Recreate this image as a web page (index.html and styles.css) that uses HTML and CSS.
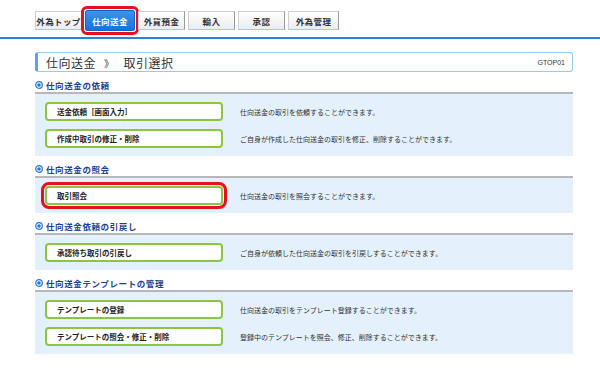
FILE: index.html
```html
<!DOCTYPE html>
<html lang="ja">
  <head>
    <meta charset="UTF-8" />
    <meta name="viewport" content="width=device-width, initial-scale=1.0" />
    <title>仕向送金 取引選択</title>
    <link rel="stylesheet" href="styles.css">
  </head>
  <body>
    <div class="tabs">
      <span class="tab">外為トップ</span>
      <span class="tab activo">仕向送金</span>
      <span class="tab">外貨預金</span>
      <span class="tab">輸入</span>
      <span class="tab">承認</span>
      <span class="tab ancho">外為管理</span>
    </div>
    <div class="linea"></div>

    <div class="contenido">
      <div class="titulo">
        <span>仕向送金<span class="sep">》</span>取引選択</span>
        <span class="codigo">GTOP01</span>
      </div>

      <div class="seccion">
        <h2><svg width="8" height="8" viewBox="0 0 8 8"><circle cx="4" cy="4" r="3.3" fill="#fff" stroke="#2474d6" stroke-width="1.2"/><circle cx="4" cy="4" r="1.8" fill="#2474d6"/></svg>仕向送金の依頼</h2>
        <div class="panel">
          <div class="fila">
            <span class="boton">送金依頼［画面入力］</span>
            <span class="desc">仕向送金の取引を依頼することができます。</span>
          </div>
          <div class="fila">
            <span class="boton">作成中取引の修正・削除</span>
            <span class="desc">ご自身が作成した仕向送金の取引を修正、削除することができます。</span>
          </div>
        </div>
      </div>

      <div class="seccion">
        <h2><svg width="8" height="8" viewBox="0 0 8 8"><circle cx="4" cy="4" r="3.3" fill="#fff" stroke="#2474d6" stroke-width="1.2"/><circle cx="4" cy="4" r="1.8" fill="#2474d6"/></svg>仕向送金の照会</h2>
        <div class="panel">
          <div class="fila">
            <span class="boton marcado">取引照会</span>
            <span class="desc">仕向送金の取引を照会することができます。</span>
          </div>
        </div>
      </div>

      <div class="seccion">
        <h2><svg width="8" height="8" viewBox="0 0 8 8"><circle cx="4" cy="4" r="3.3" fill="#fff" stroke="#2474d6" stroke-width="1.2"/><circle cx="4" cy="4" r="1.8" fill="#2474d6"/></svg>仕向送金依頼の引戻し</h2>
        <div class="panel">
          <div class="fila">
            <span class="boton">承認待ち取引の引戻し</span>
            <span class="desc">ご自身が依頼した仕向送金の取引を引戻しすることができます。</span>
          </div>
        </div>
      </div>

      <div class="seccion">
        <h2><svg width="8" height="8" viewBox="0 0 8 8"><circle cx="4" cy="4" r="3.3" fill="#fff" stroke="#2474d6" stroke-width="1.2"/><circle cx="4" cy="4" r="1.8" fill="#2474d6"/></svg>仕向送金テンプレートの管理</h2>
        <div class="panel">
          <div class="fila">
            <span class="boton">テンプレートの登録</span>
            <span class="desc">仕向送金の取引をテンプレート登録することができます。</span>
          </div>
          <div class="fila">
            <span class="boton">テンプレートの照会・修正・削除</span>
            <span class="desc">登録中のテンプレートを照会、修正、削除することができます。</span>
          </div>
        </div>
      </div>
    </div>
  </body>
</html>
```

FILE: styles.css
```css
body {
  font-family: "Noto Sans CJK JP", "Liberation Sans", sans-serif;
  background: #fff;
  color: #222;
  margin: 0;
}
.tabs {
  display: flex;
  align-items: center;
  gap: 3px;
  height: 21px;
  margin-top: 10px;
  padding-left: 35px;
}
.tab {
  width: 47px;
  height: 19px;
  box-sizing: border-box;
  display: flex;
  align-items: center;
  justify-content: center;
  font-size: 8.5px;
  font-weight: bold;
  letter-spacing: 0.4px;
  color: #333;
  background: linear-gradient(#ffffff, #ececec);
  border: 1px solid #cfcfcf;
  border-right-color: #9a9a9a;
  border-bottom: 1px solid #a9c8ea;
}
.tab.ancho {
  width: 51px;
}
.tab.activo {
  width: 50px;
  height: 21px;
  color: #fff;
  background: linear-gradient(#3b93f0, #1673dc);
  border: 1px solid #1463c4;
  border-radius: 2px;
  outline: 3px solid #e8101e;
  outline-offset: 1px;
}
.linea {
  height: 2px;
  background: #2a7fe3;
  margin-top: 6px;
}
.contenido {
  margin: 13px 27px 0 35px;
}
.titulo {
  height: 20px;
  box-sizing: border-box;
  display: flex;
  align-items: center;
  justify-content: space-between;
  padding: 0 7px 0 8px;
  border: 1px solid #98c8f4;
  border-left: 3px solid #5aa2ea;
  border-radius: 3px;
  font-size: 12px;
  letter-spacing: 0.5px;
  color: #333;
}
.sep {
  margin: 0 9px 0 8px;
  font-size: 10px;
}
.codigo {
  font-family: "Liberation Sans", sans-serif;
  font-size: 7px;
  letter-spacing: 0;
}
.seccion {
  margin-top: 6px;
}
.seccion:first-of-type {
  margin-top: 8px;
}
.seccion h2 {
  display: flex;
  align-items: center;
  gap: 3px;
  height: 14px;
  margin: 0;
  font-size: 8.5px;
  font-weight: bold;
  letter-spacing: 0.6px;
  color: #1d3f91;
  border-bottom: 2px solid #b8b8b8;
}
.panel {
  background: #e4f1fc;
  padding: 8px 10px;
  display: flex;
  flex-direction: column;
  gap: 8px;
}
.fila {
  display: flex;
  align-items: center;
}
.boton {
  width: 178px;
  height: 19px;
  box-sizing: border-box;
  display: flex;
  align-items: center;
  padding-left: 10px;
  background: #fff;
  border: 2px solid #8cc63f;
  border-radius: 4px;
  font-size: 7.5px;
  font-weight: bold;
  color: #222;
}
.boton.marcado {
  outline: 3px solid #e8101e;
  outline-offset: 1px;
}
.desc {
  margin-left: 17px;
  font-size: 7px;
  color: #333;
}
```
